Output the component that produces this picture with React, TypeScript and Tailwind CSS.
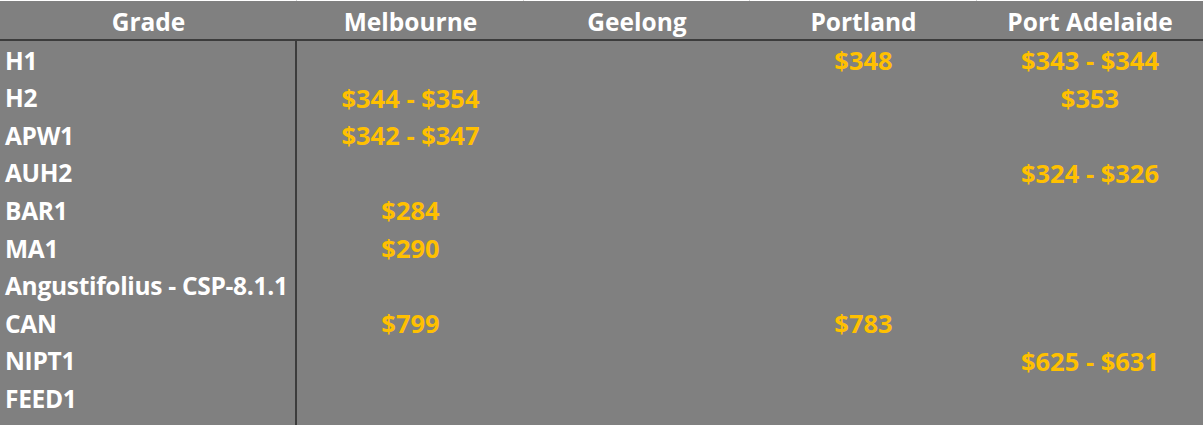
const columns = ['Melbourne', 'Geelong', 'Portland', 'Port Adelaide'];

const rows: { grade: string; prices: string[] }[] = [
  { grade: 'H1', prices: ['', '', '$348', '$343 - $344'] },
  { grade: 'H2', prices: ['$344 - $354', '', '', '$353'] },
  { grade: 'APW1', prices: ['$342 - $347', '', '', ''] },
  { grade: 'AUH2', prices: ['', '', '', '$324 - $326'] },
  { grade: 'BAR1', prices: ['$284', '', '', ''] },
  { grade: 'MA1', prices: ['$290', '', '', ''] },
  { grade: 'Angustifolius - CSP-8.1.1', prices: ['', '', '', ''] },
  { grade: 'CAN', prices: ['$799', '', '$783', ''] },
  { grade: 'NIPT1', prices: ['', '', '', '$625 - $631'] },
  { grade: 'FEED1', prices: ['', '', '', ''] },
];

const grid = 'grid grid-cols-[297px_227px_226px_227px_226px]';

export default function App() {
  return (
    <div className="w-[1203px] h-[425px] overflow-hidden flex flex-col bg-[#808080] font-['Open_Sans',sans-serif] font-bold text-[24.5px] leading-none whitespace-nowrap">
      {/* sheet gridlines above the table */}
      <div className={`${grid} h-px shrink-0 bg-white`}>
        <div className="border-r border-[#d4d4d4]" />
        <div className="border-r border-[#d4d4d4]" />
        <div className="border-r border-[#d4d4d4]" />
        <div className="border-r border-[#d4d4d4]" />
        <div />
      </div>

      <div className={`${grid} h-[40px] shrink-0 border-b-2 border-[#3c3c3c] text-white`}>
        <div className="flex items-center justify-center pt-[5px]">Grade</div>
        {columns.map((c) => (
          <div key={c} className="flex items-center justify-center pt-[5px]">
            {c}
          </div>
        ))}
      </div>

      <div className="flex-1 flex flex-col">
        <div className={`${grid} h-[1px] shrink-0`}>
          <div className="border-r-2 border-[#3c3c3c]" />
        </div>
        {rows.map((r) => (
          <div key={r.grade} className={`${grid} h-[37.6px] shrink-0`}>
            <div className="flex items-center pl-[5px] text-white border-r-2 border-[#3c3c3c] tracking-[-0.3px] overflow-hidden">
              {r.grade}
            </div>
            {r.prices.map((p, i) => (
              <div key={i} className="flex items-center justify-center text-[#ffc000] text-[25.5px]">
                {p}
              </div>
            ))}
          </div>
        ))}
        <div className={`${grid} flex-1`}>
          <div className="border-r-2 border-[#3c3c3c]" />
        </div>
      </div>
    </div>
  );
}
